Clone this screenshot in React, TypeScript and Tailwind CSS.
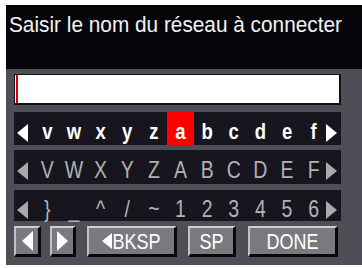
import type { ReactElement, ReactNode } from "react";

const ROW1 = ["v", "w", "x", "y", "z", "a", "b", "c", "d", "e", "f"];
const ROW2 = ["V", "W", "X", "Y", "Z", "A", "B", "C", "D", "E", "F"];
const ROW3 = ["}", "_", "^", "/", "~", "1", "2", "3", "4", "5", "6"];

function Tri({ dir, color, w = 11, h = 18 }: { dir: "left" | "right"; color: string; w?: number; h?: number }): ReactElement {
	const pts = dir === "left" ? `${w},0 ${w},${h} 0,${h / 2}` : `0,0 0,${h} ${w},${h / 2}`;
	return (
		<svg width={w} height={h} viewBox={`0 0 ${w} ${h}`} className="block">
			<polygon points={pts} fill={color} />
		</svg>
	);
}

function KeyRow({
	keys,
	active,
	textClass,
	arrowColor,
	h,
}: {
	keys: string[];
	active?: number;
	textClass: string;
	arrowColor: string;
	h: string;
}): ReactElement {
	return (
		<div className={`grid ${h} grid-cols-[20px_repeat(11,minmax(0,1fr))_14px] bg-[#17161e]`}>
			<div className="flex items-center pl-[3px] pt-[8px]">
				<Tri dir="left" color={arrowColor} />
			</div>
			{keys.map((k, i) => (
				<div
					key={k}
					className={`flex items-center justify-center pt-[8px] leading-none ${textClass} ${i === active ? "bg-[#ff0000]" : ""}`}
				>
					<span className="inline-block scale-y-120">{k}</span>
				</div>
			))}
			<div className="-ml-[1px] flex items-center pt-[8px]">
				<Tri dir="right" color={arrowColor} />
			</div>
		</div>
	);
}

function Btn({ w, children }: { w: string; children: ReactNode }): ReactElement {
	return (
		<div
			className={`flex h-[31px] ${w} items-center justify-center border-t-2 border-l-2 border-r-[3px] border-b-[3px] border-t-[#cfcfd2] border-l-[#c2c2c5] border-r-[#08080a] border-b-[#08080a] bg-[#7a797d] text-[18px] leading-none text-white`}
		>
			{children}
		</div>
	);
}

export default function App(): ReactElement {
	return (
		<div className="h-[268px] w-[362px] overflow-hidden bg-white pl-[6px] pt-[5px]" style={{ fontFamily: '"Liberation Sans", Arial, sans-serif' }}>
			<div className="flex h-[260px] w-[356px] flex-col bg-[#4f4d55]">
				<div className="h-[64px] bg-[#06050a] pl-[3px] pt-[6px] text-[20.8px] leading-[24px] text-[#f2f2f2]">
					<span className="inline-block origin-top scale-y-110 whitespace-nowrap">Saisir le nom du réseau à connecter</span>
				</div>
				<div className="flex flex-col pl-[8px] pt-[5px]">
					<div className="h-[31px] w-[327px] border border-b-2 border-r-2 border-[#111] bg-white pl-[1px]">
						<div className="h-full w-[2px] bg-[#e0000a]" />
					</div>
					<div className="mt-[7px] flex w-[327px] flex-col">
						<KeyRow keys={ROW1} active={5} textClass="text-[18.5px] font-bold text-white" arrowColor="#ffffff" h="h-[33px]" />
						<div className="mt-[5px]">
							<KeyRow keys={ROW2} textClass="text-[19.5px] text-[#b2b1b6]" arrowColor="#a9a9ad" h="h-[34px]" />
						</div>
						<div className="mt-[6px]">
							<KeyRow keys={ROW3} textClass="text-[19.5px] text-[#b2b1b6]" arrowColor="#a9a9ad" h="h-[31px]" />
						</div>
					</div>
					<div className="mt-[5px] flex w-[327px]">
						<Btn w="w-[27px]">
							<Tri dir="left" color="#ffffff" w={11} h={20} />
						</Btn>
						<div className="ml-[9px]">
							<Btn w="w-[26px]">
								<Tri dir="right" color="#ffffff" w={11} h={20} />
							</Btn>
						</div>
						<div className="ml-[11px]">
							<Btn w="w-[90px]">
								<Tri dir="left" color="#ffffff" w={10} h={16} />
								<span className="inline-block scale-y-125">BKSP</span>
							</Btn>
						</div>
						<div className="ml-[11px]">
							<Btn w="w-[48px]">
								<span className="inline-block scale-y-125">SP</span>
							</Btn>
						</div>
						<div className="ml-[12px]">
							<Btn w="w-[90px]">
								<span className="inline-block scale-y-125">DONE</span>
							</Btn>
						</div>
					</div>
				</div>
			</div>
		</div>
	);
}
